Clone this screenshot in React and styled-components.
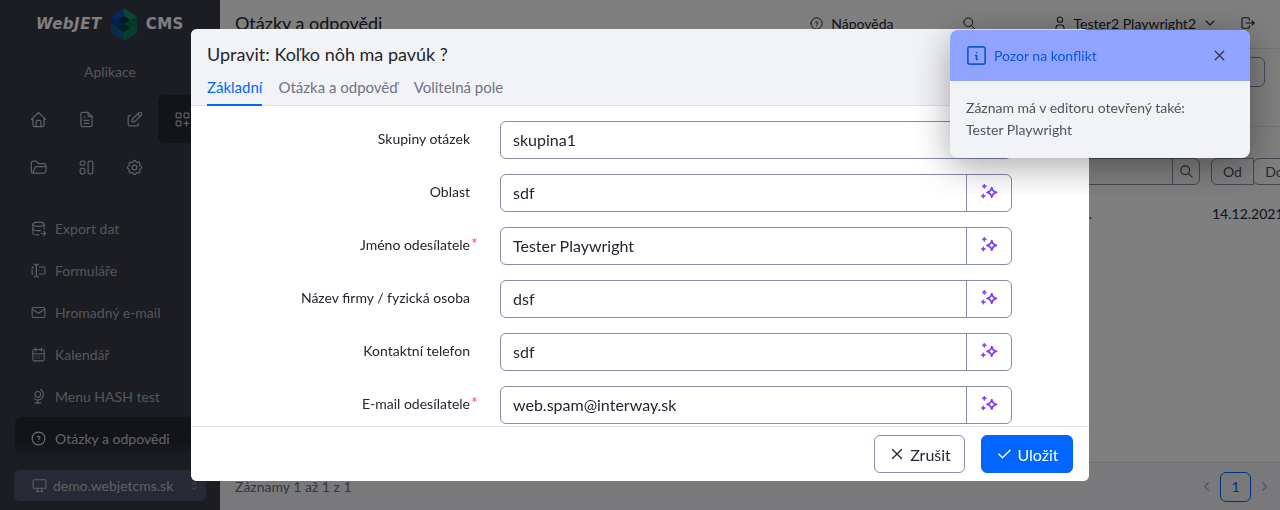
import React from 'react';
import styled, { createGlobalStyle } from 'styled-components';
import {
  TbHome,
  TbFileText,
  TbEdit,
  TbLayoutGridAdd,
  TbFolderOpen,
  TbLayout,
  TbSettings,
  TbDatabaseExport,
  TbForms,
  TbMail,
  TbCalendarMonth,
  TbGlobe,
  TbHelpCircle,
  TbDeviceDesktop,
  TbSelector,
  TbSearch,
  TbUser,
  TbChevronDown,
  TbChevronLeft,
  TbChevronRight,
  TbLogout,
  TbInfoSquare,
  TbX,
  TbCheck,
} from 'react-icons/tb';

const FONT = '"Lato", "Noto Sans", sans-serif';

const GlobalStyle = createGlobalStyle`
  html, body {
    margin: 0;
    height: 100%;
    overflow: hidden;
    font-family: ${FONT};
    color: #23262f;
  }
  * {
    box-sizing: border-box;
  }
`;

const QUICK_ICONS = [
  { Icon: TbHome },
  { Icon: TbFileText },
  { Icon: TbEdit },
  { Icon: TbLayoutGridAdd, active: true },
  { Icon: TbFolderOpen },
  { Icon: TbLayout },
  { Icon: TbSettings },
];

const MENU = [
  { Icon: TbDatabaseExport, label: 'Export dat' },
  { Icon: TbForms, label: 'Formuláře' },
  { Icon: TbMail, label: 'Hromadný e-mail' },
  { Icon: TbCalendarMonth, label: 'Kalendář' },
  { Icon: TbGlobe, label: 'Menu HASH test' },
  { Icon: TbHelpCircle, label: 'Otázky a odpovědi', active: true },
];

const FIELDS = [
  { label: 'Skupiny otázek', value: 'skupina1' },
  { label: 'Oblast', value: 'sdf' },
  { label: 'Jméno odesílatele', value: 'Tester Playwright', required: true },
  { label: 'Název firmy / fyzická osoba', value: 'dsf' },
  { label: 'Kontaktní telefon', value: 'sdf' },
  { label: 'E-mail odesílatele', value: 'web.spam@interway.sk', required: true },
];

const Sparkle = () => (
  <svg width="18" height="18" viewBox="0 0 18 18" fill="none">
    <path
      d="M11.8 3.6c.5 3 1.600 4.100 4.600 4.800-3 .7-4.100 1.800-4.600 4.800-.6-3-1.700-4.100-4.700-4.800 3-.7 4.100-1.800 4.700-4.800z"
      stroke="#7c3cf6"
      strokeWidth="1.800"
      strokeLinejoin="round"
    />
    <path d="M4.300 0c.3 1.400.9 2 2.300 2.300-1.400.3-2 .9-2.300 2.300C4 3.200 3.400 2.600 2 2.300 3.400 2 4 1.400 4.300 0z" fill="#7c3cf6" stroke="#7c3cf6" strokeWidth=".8" />
    <path d="M3.300 9.700c.3 1.400.9 2 2.300 2.300-1.400.3-2 .9-2.300 2.300-.3-1.400-.9-2-2.300-2.300 1.400-.3 2-.9 2.300-2.300z" fill="#7c3cf6" stroke="#7c3cf6" strokeWidth=".8" />
  </svg>
);

const LogoCube = () => (
  <svg width="28" height="33" viewBox="0 0 28 33">
    <polygon points="14,0 14,16 1,9" fill="#0f4fc0" />
    <polygon points="14,0 27,9 14,16" fill="#1b8f5a" />
    <polygon points="1,9 14,16 14,23 1,16" fill="#0b3f9a" />
    <polygon points="27,9 14,16 14,23 27,16" fill="#0f6f4e" />
    <polygon points="1,16 14,23 14,33 1,25" fill="#145a8a" />
    <polygon points="27,16 14,23 14,33 27,25" fill="#137a60" />
    <polygon points="8,12 14,8 20,12 14,16" fill="#0a3030" />
    <polygon points="8,20 14,16 20,20 14,24" fill="#0a4040" />
  </svg>
);

export default function App() {
  return (
    <>
      <GlobalStyle />
      <Page>
        <Sidebar>
          <Logo>
            <LogoWord>WebJET</LogoWord>
            <LogoCube />
            <LogoCms>CMS</LogoCms>
          </Logo>
          <SectionTitle>Aplikace</SectionTitle>
          <QuickGrid>
            {QUICK_ICONS.map(({ Icon, active }, index) => (
              <QuickCell key={index} $active={active}>
                <Icon size={19} strokeWidth={1.5} />
              </QuickCell>
            ))}
          </QuickGrid>
          <Menu>
            {MENU.map(({ Icon, label, active }) => (
              <MenuItem key={label} $active={active}>
                <Icon size={17} strokeWidth={1.5} />
                {label}
              </MenuItem>
            ))}
          </Menu>
          <SiteSelect>
            <TbDeviceDesktop size={17} strokeWidth={1.5} />
            <SiteName>demo.webjetcms.sk</SiteName>
            <TbSelector size={12} strokeWidth={1.5} />
          </SiteSelect>
        </Sidebar>

        <Main>
          <TopBar>
            <PageTitle>Otázky a odpovědi</PageTitle>
            <TopHelp>
              <TbHelpCircle size={15} strokeWidth={1.6} />
              Nápověda
            </TopHelp>
            <TopSearch>
              <TbSearch size={15} strokeWidth={1.6} />
            </TopSearch>
            <TopUser>
              <TbUser size={16} strokeWidth={1.6} />
              Tester2 Playwright2
              <TbChevronDown size={16} strokeWidth={1.6} />
            </TopUser>
            <TbLogout size={16} strokeWidth={1.6} />
          </TopBar>
          <Toolbar>
            <ToolButton />
          </Toolbar>
          <TableHead>
            <HeadCell>Otázka</HeadCell>
            <HeadCell>Zadán</HeadCell>
          </TableHead>
          <FilterRow>
            <FilterGroup>
              <FilterInput />
              <FilterPart $square>
                <TbSearch size={15} strokeWidth={1.8} />
              </FilterPart>
            </FilterGroup>
            <FilterGroup>
              <FilterPart>Od</FilterPart>
              <FilterPart>Do</FilterPart>
            </FilterGroup>
          </FilterRow>
          <TableRow>
            <QuestionCell>8 nôh.</QuestionCell>
            <DateCell>14.12.2021 10:15</DateCell>
          </TableRow>
          <TableFooter>
            Záznamy 1 až 1 z 1
            <Pager>
              <TbChevronLeft size={15} />
              <PageNumber>1</PageNumber>
              <TbChevronRight size={15} />
            </Pager>
          </TableFooter>
        </Main>
      </Page>

      <Backdrop />

      <DialogLayer>
        <Dialog>
          <DialogHead>
            <DialogTitle>Upravit: Koľko nôh ma pavúk ?</DialogTitle>
            <Tabs>
              <Tab $active>Základní</Tab>
              <Tab>Otázka a odpověď</Tab>
              <Tab>Volitelná pole</Tab>
            </Tabs>
          </DialogHead>
          <DialogBody>
            {FIELDS.map(({ label, value, required }) => (
              <FieldRow key={label}>
                <FieldLabel>
                  {label}
                  {required && <Required>*</Required>}
                </FieldLabel>
                <InputGroup>
                  <InputValue>{value}</InputValue>
                  <AiButton>
                    <Sparkle />
                  </AiButton>
                </InputGroup>
              </FieldRow>
            ))}
          </DialogBody>
          <DialogFooter>
            <CancelButton>
              <TbX size={18} strokeWidth={1.8} />
              Zrušit
            </CancelButton>
            <SaveButton>
              <TbCheck size={18} strokeWidth={1.8} />
              Uložit
            </SaveButton>
          </DialogFooter>
        </Dialog>
      </DialogLayer>

      <ToastLayer>
        <Toast>
          <ToastHead>
            <TbInfoSquare size={23} strokeWidth={1.7} />
            <ToastTitle>Pozor na konflikt</ToastTitle>
            <ToastClose>
              <TbX size={17} strokeWidth={1.7} />
            </ToastClose>
          </ToastHead>
          <ToastBody>
            Záznam má v editoru otevřený také:
            <br />
            Tester Playwright
          </ToastBody>
        </Toast>
      </ToastLayer>
    </>
  );
}

const Page = styled.div`
  display: grid;
  grid-template-columns: 220px 1fr;
  height: 510px;
  overflow: hidden;
`;

const Sidebar = styled.aside`
  display: flex;
  flex-direction: column;
  background: #363a46;
  color: #a9adb9;
  font-size: 14px;
`;

const Logo = styled.div`
  display: flex;
  align-items: center;
  justify-content: center;
  gap: 8px;
  height: 48px;
  padding-top: 0;
  color: #fff;
`;

const LogoWord = styled.span`
  font-family: "DejaVu Sans", sans-serif;
  font-size: 15px;
  font-weight: bold;
  font-style: italic;
  letter-spacing: 0.5px;
`;

const LogoCms = styled.span`
  font-family: "DejaVu Sans", sans-serif;
  font-size: 15px;
  font-weight: bold;
  letter-spacing: 0.5px;
`;

const SectionTitle = styled.div`
  height: 47px;
  line-height: 48px;
  text-align: center;
`;

const QuickGrid = styled.div`
  display: grid;
  grid-template-columns: repeat(4, 48px);
  grid-auto-rows: 48px;
  padding-left: 14px;
`;

const QuickCell = styled.div`
  display: flex;
  align-items: center;
  justify-content: center;
  border-radius: 6px;
  background: ${(p) => (p.$active ? '#26282f' : 'transparent')};
  color: #bcc0cc;
`;

const Menu = styled.nav`
  display: flex;
  flex-direction: column;
  padding: 16px 0 0 15px;
`;

const MenuItem = styled.div`
  display: flex;
  align-items: center;
  gap: 8px;
  height: 42px;
  padding-left: 15px;
  border-radius: 6px 0 0 6px;
  background: ${(p) => (p.$active ? 'linear-gradient(#26282f 55%, #363a46)' : 'transparent')};
  color: ${(p) => (p.$active ? '#c6c9d2' : '#a9adb9')};
  svg {
    flex: none;
    color: ${(p) => (p.$active ? '#e3e5ea' : '#bcc0cc')};
  }
`;

const SiteSelect = styled.div`
  display: flex;
  align-items: center;
  height: 31px;
  width: 192px;
  margin: 11px 0 0 14px;
  padding: 0 6px 0 17px;
  border-radius: 6px;
  background: #4e5469;
  color: #bcc0cc;
`;

const SiteName = styled.span`
  flex: 1;
  margin-left: 5px;
`;

const Main = styled.main`
  display: flex;
  flex-direction: column;
  min-width: 0;
  background: #fff;
  font-size: 14px;
`;

const TopBar = styled.header`
  display: flex;
  align-items: center;
  height: 49px;
  padding: 0 24px 2px 15px;
  border-bottom: 1px solid #e4e6ee;
  color: #23262f;
`;

const PageTitle = styled.h1`
  flex: 1;
  margin: 0;
  font-size: 18px;
  font-weight: 400;
`;

const TopHelp = styled.div`
  display: flex;
  align-items: center;
  gap: 7px;
`;

const TopSearch = styled.div`
  display: flex;
  margin: 0 75px 0 68px;
`;

const TopUser = styled.div`
  display: flex;
  align-items: center;
  gap: 6px;
  margin-right: 22px;
`;

const Toolbar = styled.div`
  display: flex;
  justify-content: flex-end;
  height: 78px;
  padding: 8px 15px 0 0;
  border-bottom: 1px solid #e4e6ee;
`;

const ToolButton = styled.div`
  width: 65px;
  height: 30px;
  border: 1px solid #8a8fab;
  border-radius: 6px;
`;

const TableHead = styled.div`
  display: grid;
  grid-template-columns: 1fr 68px;
  gap: 12px;
  align-items: center;
  height: 31px;
  padding-left: 15px;
  font-weight: 700;
`;

const HeadCell = styled.div`
  white-space: nowrap;
`;

const FilterRow = styled.div`
  display: grid;
  grid-template-columns: 1fr 68px;
  gap: 12px;
  height: 27px;
  padding-left: 15px;
`;

const FilterGroup = styled.div`
  display: flex;
  height: 27px;
`;

const FilterInput = styled.div`
  flex: 1;
  border: 1px solid #8a8fab;
  border-radius: 6px 0 0 6px;
`;

const FilterPart = styled.div`
  display: flex;
  flex: none;
  align-items: center;
  justify-content: center;
  width: ${(p) => (p.$square ? '28px' : '43px')};
  margin-left: -1px;
  border: 1px solid #8a8fab;
  border-radius: ${(p) => (p.$square ? '0 6px 6px 0' : '6px 0 0 6px')};
  color: #50535f;
`;

const TableRow = styled.div`
  display: grid;
  grid-template-columns: 1fr 68px;
  gap: 12px;
  align-items: center;
  height: 56px;
  padding-left: 15px;
`;

const QuestionCell = styled.div`
  padding-right: 108px;
  text-align: right;
`;

const DateCell = styled.div`
  white-space: nowrap;
`;

const TableFooter = styled.footer`
  display: flex;
  align-items: center;
  justify-content: space-between;
  height: 48px;
  margin-top: auto;
  padding: 0 8px 0 15px;
  border-top: 1px solid #d8dae2;
  background: #f3f3f6;
  color: #6a6d79;
`;

const Pager = styled.div`
  display: flex;
  align-items: center;
  gap: 6px;
  color: #a9adb9;
`;

const PageNumber = styled.div`
  display: flex;
  align-items: center;
  justify-content: center;
  width: 31px;
  height: 30px;
  border: 1px solid #0066ff;
  border-radius: 6px;
  color: #0066ff;
`;

const Backdrop = styled.div`
  position: fixed;
  inset: 0;
  background: rgba(0, 0, 0, 0.5);
`;

const DialogLayer = styled.div`
  position: fixed;
  inset: 0;
  display: flex;
  justify-content: center;
  padding-top: 29px;
`;

const Dialog = styled.div`
  display: flex;
  flex-direction: column;
  width: 898px;
  height: 452px;
  border-radius: 6px;
  background: #fff;
  overflow: hidden;
`;

const DialogHead = styled.div`
  flex: none;
  height: 77px;
  padding: 13px 16px 0;
  border-bottom: 1px solid #dfe1ea;
  background: #f2f3f6;
`;

const DialogTitle = styled.h2`
  margin: 0;
  font-size: 18px;
  font-weight: 400;
  line-height: 24px;
`;

const Tabs = styled.div`
  display: flex;
  gap: 16px;
  margin-top: 7px;
`;

const Tab = styled.div`
  height: 33px;
  line-height: 28px;
  font-size: 15px;
  color: ${(p) => (p.$active ? '#0066ff' : '#6f7488')};
  border-bottom: 2px solid ${(p) => (p.$active ? '#0066ff' : 'transparent')};
`;

const DialogBody = styled.div`
  flex: 1;
  display: flex;
  flex-direction: column;
  gap: 15px;
  min-height: 0;
  padding-top: 15px;
  overflow: hidden;
`;

const FieldRow = styled.div`
  display: grid;
  flex: none;
  grid-template-columns: 279px 512px;
  column-gap: 30px;
  align-items: center;
  height: 38px;
`;

const FieldLabel = styled.label`
  position: relative;
  font-size: 14px;
  text-align: right;
  padding-bottom: 3px;
`;

const Required = styled.span`
  position: absolute;
  top: -3px;
  left: 100%;
  margin-left: 1px;
  color: #ff4b5c;
  font-size: 16px;
`;

const InputGroup = styled.div`
  display: flex;
  height: 38px;
  border: 1px solid #868ba6;
  border-radius: 6px;
`;

const InputValue = styled.div`
  flex: 1;
  padding: 0 12px;
  font-size: 16px;
  line-height: 36px;
`;

const AiButton = styled.div`
  display: flex;
  flex: none;
  align-items: center;
  justify-content: center;
  width: 45px;
  border-left: 1px solid #868ba6;
`;

const DialogFooter = styled.div`
  display: flex;
  flex: none;
  align-items: center;
  justify-content: flex-end;
  gap: 16px;
  height: 55px;
  padding-right: 16px;
  border-top: 1px solid #dfe1ea;
  background: #fff;
`;

const CancelButton = styled.div`
  display: flex;
  align-items: center;
  justify-content: center;
  gap: 4px;
  width: 91px;
  height: 38px;
  border: 1px solid #868ba6;
  border-radius: 6px;
  font-size: 16px;
`;

const SaveButton = styled(CancelButton)`
  width: 92px;
  border-color: #0066ff;
  background: #0066ff;
  color: #fff;
`;

const ToastLayer = styled.div`
  position: fixed;
  top: 0;
  left: 0;
  right: 0;
  height: 194px;
  display: flex;
  justify-content: flex-end;
  padding: 30px 30px 0 0;
  overflow: hidden;
`;

const Toast = styled.div`
  width: 300px;
  height: 128px;
  border-radius: 8px;
  background: #f2f3f6;
  box-shadow: 0 8px 36px rgba(0, 0, 0, 0.35);
  overflow: hidden;
`;

const ToastHead = styled.div`
  display: flex;
  align-items: center;
  height: 51px;
  padding: 0 22px 0 15px;
  background: #90a4ff;
  color: #0b57d8;
`;

const ToastTitle = styled.div`
  flex: 1;
  margin-left: 6px;
  font-size: 14px;
`;

const ToastClose = styled.div`
  display: flex;
  color: #2c3150;
`;

const ToastBody = styled.div`
  padding: 16px;
  font-size: 14px;
  line-height: 22px;
  color: #50535f;
`;
